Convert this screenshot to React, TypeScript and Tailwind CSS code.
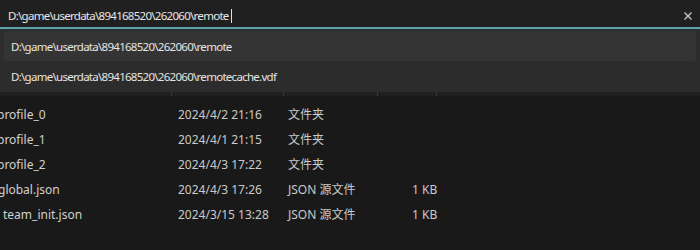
import React from "react";

const rows = [
  { name: "profile_0", date: "2024/4/2 21:16", type: "文件夹", size: "", off: "-ml-[3px]" },
  { name: "profile_1", date: "2024/4/1 21:15", type: "文件夹", size: "", off: "-ml-[3px]" },
  { name: "profile_2", date: "2024/4/3 17:22", type: "文件夹", size: "", off: "-ml-[3px]" },
  { name: "global.json", date: "2024/4/3 17:26", type: "JSON 源文件", size: "1 KB", off: "-ml-[2px]" },
  { name: "team_init.json", date: "2024/3/15 13:28", type: "JSON 源文件", size: "1 KB", off: "ml-[3px]" },
];

const pathCls = "text-[11.5px] tracking-[-0.72px]";

export default function App() {
  return (
    <div
      className="w-[700px] h-[250px] overflow-hidden bg-[#191919] text-[12px] flex flex-col"
      style={{ fontFamily: '"Noto Sans", "Noto Sans CJK SC", sans-serif' }}
    >
      <div className="h-[27px] bg-[#202020] flex items-center pt-[4px] pl-[8px] pr-[8px] shrink-0">
        <span className={`text-[#e8e8e8] ${pathCls}`}>D:\game\userdata\894168520\262060\remote</span>
        <span className="w-px h-[14px] bg-[#e0e0e0] ml-[2px]" />
        <div className="flex-1" />
        <svg width="8" height="8" viewBox="0 0 8 8">
          <path d="M0.5 0.5 L7.5 7.5 M7.5 0.5 L0.5 7.5" stroke="#d0d0d0" strokeWidth="1.2" />
        </svg>
      </div>
      <div className="h-[3px] bg-[#5aa3ad] border-b border-[#23363a] shrink-0" />
      <div className="bg-[#2c2c2c] pt-[1px] pb-[1px] shrink-0">
        <div className={`h-[30px] mx-[4px] rounded-[3px] bg-[#343434] flex items-center pl-[7px] pt-[1px] text-[#e6e6e6] ${pathCls}`}>
          D:\game\userdata\894168520\262060\remote
        </div>
        <div className={`h-[30px] mx-[4px] flex items-center pl-[7px] pt-[1px] text-[#e6e6e6] ${pathCls}`}>
          D:\game\userdata\894168520\262060\remotecache.vdf
        </div>
      </div>
      <div className="h-[4px] bg-[#202020] flex shrink-0">
        <div className="w-[172px] border-r border-[#3a3a3a]" />
        <div className="w-[112px] border-r border-[#3a3a3a]" />
        <div className="w-[94px] border-r border-[#3a3a3a]" />
        <div className="w-[59px] border-r border-[#3a3a3a]" />
      </div>
      <div className="flex flex-col pt-[6px] text-[#d2d2d2]">
        {rows.map((r) => (
          <div key={r.name} className="h-[25px] flex items-center">
            <div className="w-[178px] shrink-0 overflow-hidden">
              <div className={r.off}>{r.name}</div>
            </div>
            <div className="w-[110px] shrink-0 text-[#cacaca]">{r.date}</div>
            <div className="w-[124px] shrink-0 text-[#cacaca]">{r.type}</div>
            <div className="w-[80px] shrink-0 text-[#cacaca]">{r.size}</div>
          </div>
        ))}
      </div>
    </div>
  );
}
